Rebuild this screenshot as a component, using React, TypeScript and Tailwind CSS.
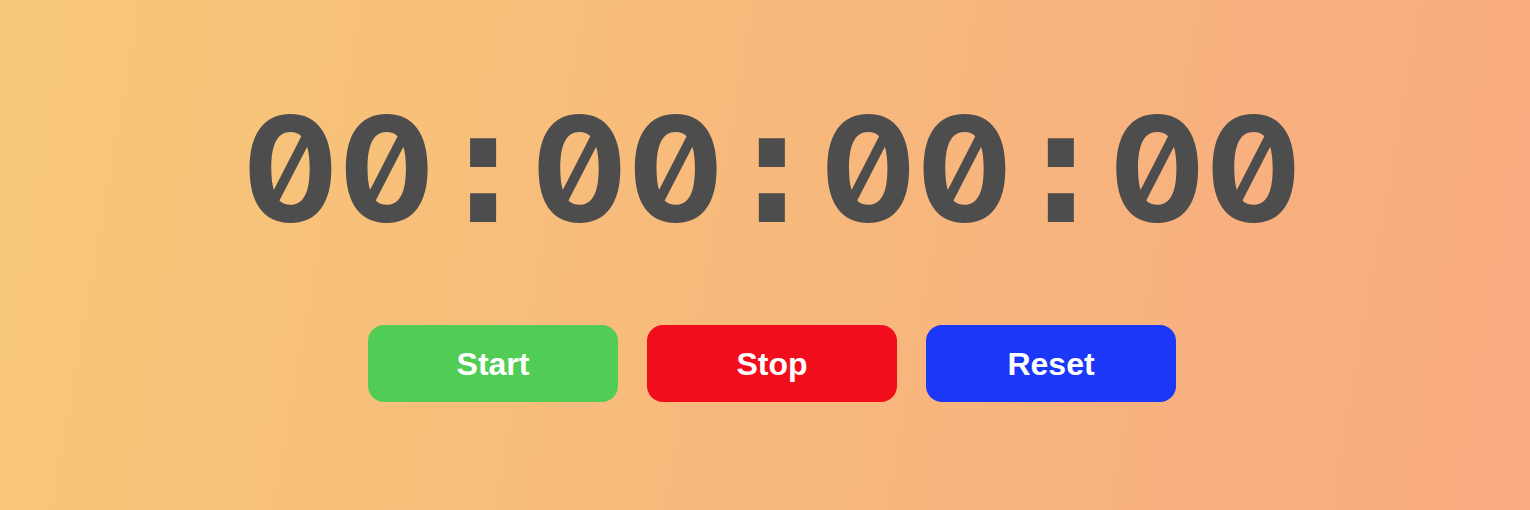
const chars = "00:00:00:00".split("");

export default function App() {
  return (
    <div className="w-full h-[510px] bg-[linear-gradient(100deg,#f7c878,#f8aa80)] flex flex-col items-center pt-[87px] pl-[14px] font-['Liberation_Sans',Arial,sans-serif]">
      <div className="flex items-baseline leading-none font-bold text-[#4d4d4d] slashed-zero tabular-nums">
        {chars.map((c, i) =>
          c === ":" ? (
            <span key={i} className="w-[96.3px] text-center text-[160px] font-['DejaVu_Sans_Mono',monospace]">
              :
            </span>
          ) : (
            <span key={i} className="w-[96.3px] text-center text-[147px] font-['Inter',sans-serif]">
              0
            </span>
          )
        )}
      </div>
      <div className="flex gap-[29px] mt-[78px]">
        <button className="w-[250px] h-[77px] rounded-2xl bg-[#51cd55] text-white text-[32px] font-bold">
          Start
        </button>
        <button className="w-[250px] h-[77px] rounded-2xl bg-[#f20d1c] text-white text-[32px] font-bold">
          Stop
        </button>
        <button className="w-[250px] h-[77px] rounded-2xl bg-[#1b37f8] text-white text-[32px] font-bold">
          Reset
        </button>
      </div>
    </div>
  );
}
